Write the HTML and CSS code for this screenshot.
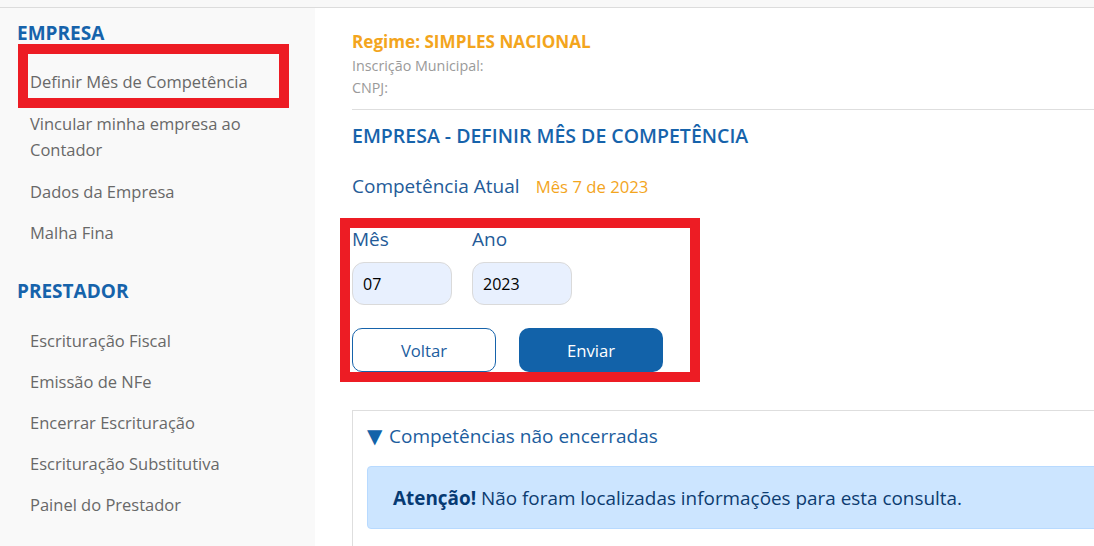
FILE: index.html
```html
<!DOCTYPE html>
<html lang="pt-BR">
<head>
    <meta charset="UTF-8">
    <meta name="viewport" content="width=device-width, initial-scale=1.0">
    <title>Definir Mês de Competência</title>
    <link rel="stylesheet" href="styles.css">
</head>
<body>
    <div class="topbar"></div>
    <div class="page">
        <nav class="sidebar">
            <h3 class="menu-title">EMPRESA</h3>
            <ul class="menu">
                <li class="menu-item active"><a href="#">Definir Mês de Competência</a></li>
                <li class="menu-item"><a href="#">Vincular minha empresa ao Contador</a></li>
                <li class="menu-item"><a href="#">Dados da Empresa</a></li>
                <li class="menu-item"><a href="#">Malha Fina</a></li>
            </ul>
            <h3 class="menu-title prestador">PRESTADOR</h3>
            <ul class="menu">
                <li class="menu-item"><a href="#">Escrituração Fiscal</a></li>
                <li class="menu-item"><a href="#">Emissão de NFe</a></li>
                <li class="menu-item"><a href="#">Encerrar Escrituração</a></li>
                <li class="menu-item"><a href="#">Escrituração Substitutiva</a></li>
                <li class="menu-item"><a href="#">Painel do Prestador</a></li>
            </ul>
        </nav>

        <main class="content">
            <div class="company">
                <div class="regime">Regime: SIMPLES NACIONAL</div>
                <div class="company-info">Inscrição Municipal:</div>
                <div class="company-info">CNPJ:</div>
            </div>

            <h2 class="page-title">EMPRESA - DEFINIR MÊS DE COMPETÊNCIA</h2>

            <div class="current">
                <span class="current-label">Competência Atual</span>
                <span class="current-value">Mês 7 de 2023</span>
            </div>

            <form class="period-form">
                <div class="fields">
                    <label class="field">
                        <span class="field-label">Mês</span>
                        <input type="text" class="field-input" value="07">
                    </label>
                    <label class="field">
                        <span class="field-label">Ano</span>
                        <input type="text" class="field-input" value="2023">
                    </label>
                </div>
                <div class="actions">
                    <button type="button" class="btn btn-outline">Voltar</button>
                    <button type="submit" class="btn btn-primary">Enviar</button>
                </div>
            </form>

            <details class="panel" open>
                <summary class="panel-title"><span class="arrow">▼</span>Competências não encerradas</summary>
                <div class="alert">
                    <strong>Atenção!</strong> Não foram localizadas informações para esta consulta.
                </div>
            </details>
        </main>
    </div>
</body>
</html>
```

FILE: styles.css
```css
body {
    margin: 0;
    font-family: 'Open Sans', 'Noto Sans', sans-serif;
    background-color: #fff;
    overflow: hidden;
}
.topbar {
    height: 7px;
    background-color: #f8f8f8;
    border-bottom: 1px solid #dcdcdc;
}
.page {
    display: flex;
    min-height: 538px;
}
.sidebar {
    width: 315px;
    flex-shrink: 0;
    background-color: #f9f9f9;
    padding: 13px 0 0 17px;
    box-sizing: border-box;
}
.menu-title {
    margin: 0;
    font-size: 19px;
    line-height: 24px;
    font-weight: 700;
    color: #1663ab;
}
.menu-title.prestador {
    margin-top: 25px;
}
.menu {
    list-style: none;
    margin: 17px 0 0;
    padding: 0 0 0 13px;
}
.prestador + .menu {
    margin-top: 18px;
}
.menu-item {
    padding: 7px 0 8px;
    font-size: 16.5px;
    line-height: 26px;
    max-width: 240px;
}
.menu-item a {
    color: #686868;
    text-decoration: none;
}
.menu-item.active {
    position: relative;
    margin-bottom: 1px;
}
.menu-item.active + .menu-item {
    margin-bottom: 1px;
}
.menu-item.active::after {
    content: '';
    position: absolute;
    left: -12px;
    top: -18px;
    width: 251px;
    height: 44px;
    border: 10px solid #ed1c24;
}
.content {
    width: 780px;
    flex-shrink: 0;
    padding: 23px 0 0 37px;
}
.regime {
    font-size: 17.1px;
    line-height: 22px;
    font-weight: 700;
    color: #f3a51d;
    margin-bottom: 2px;
}
.company-info {
    font-size: 14.3px;
    line-height: 22px;
    color: #9a9a9a;
}
.company {
    padding-bottom: 10px;
    border-bottom: 1px solid #dedede;
}
.page-title {
    margin: 13px 0 0;
    font-size: 19.5px;
    line-height: 26px;
    font-weight: 600;
    color: #1663ab;
}
.current {
    margin-top: 24px;
    line-height: 26px;
}
.current-label {
    font-size: 19px;
    color: #245b98;
}
.current-value {
    margin-left: 12px;
    font-size: 16.7px;
    color: #f3a51d;
}
.period-form {
    display: inline-block;
    margin: 28px 0 0 -2px;
    padding-left: 2px;
    width: 340px;
    box-sizing: border-box;
    outline: 10px solid #ed1c24;
}
.fields {
    display: flex;
    gap: 20px;
}
.field {
    display: flex;
    flex-direction: column;
    gap: 12px;
}
.field-label {
    font-size: 19px;
    line-height: 22px;
    color: #245b98;
}
.field-input {
    width: 100px;
    height: 43px;
    box-sizing: border-box;
    padding: 0 10px;
    font-family: inherit;
    font-size: 16px;
    color: #000;
    background-color: #e8f0fe;
    border: 1px solid #dadada;
    border-radius: 12px;
}
.fields + .actions {
    margin-top: 23px;
}
.actions {
    display: flex;
    gap: 23px;
}
.btn {
    width: 144px;
    height: 44px;
    font-family: inherit;
    font-size: 16.7px;
    border-radius: 10px;
    cursor: pointer;
}
.btn-outline {
    background-color: #fff;
    color: #1c5d9e;
    border: 1px solid #1663ab;
}
.btn-primary {
    background-color: #1262a9;
    color: #fff;
    border: none;
}
.panel {
    margin-top: 38px;
    border: 1px solid #dedede;
    padding: 12px 0 40px 14px;
}
.panel-title {
    list-style: none;
    font-size: 19px;
    line-height: 26px;
    color: #1c5d9e;
    cursor: pointer;
}
.panel-title::-webkit-details-marker {
    display: none;
}
.arrow {
    display: inline-block;
    width: 22px;
    font-family: 'DejaVu Sans', sans-serif;
    font-size: 20px;
    line-height: 20px;
    color: #1262a9;
}
.alert {
    margin-top: 17px;
    padding: 18px 25px 17px;
    font-size: 18.9px;
    line-height: 26px;
    color: #0d3c70;
    background-color: #cce5ff;
    border: 1px solid #b8daff;
    border-radius: 4px;
}
.alert strong {
    color: #063a73;
}
```
